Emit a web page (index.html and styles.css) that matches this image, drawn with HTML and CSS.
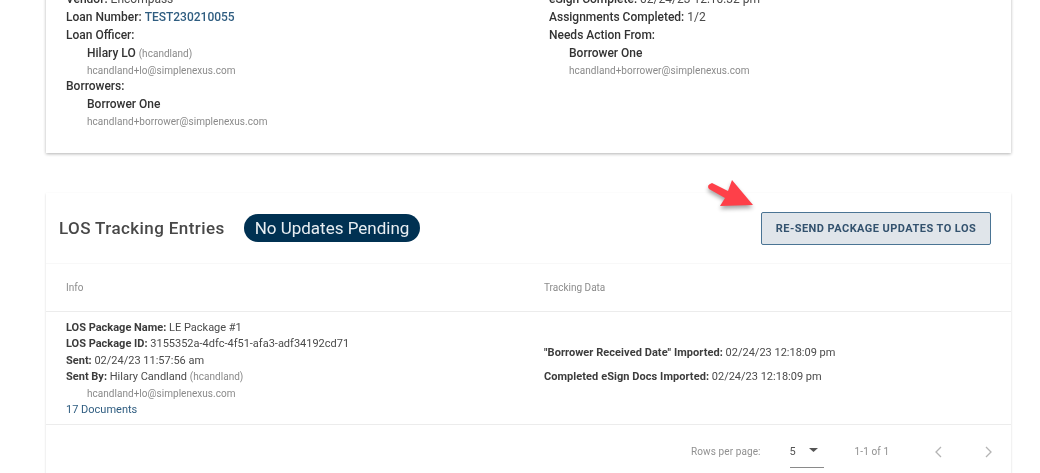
FILE: index.html
```html
<!DOCTYPE html>
<html lang="en">
<head>
<meta charset="utf-8">
<title>LOS Tracking</title>
<link rel="stylesheet" href="styles.css">
</head>
<body>
<div class="page">
  <section class="card summary">
    <div class="col">
      <div class="line"><b>Vendor:</b> Encompass</div>
      <div class="line"><b>Loan Number:</b> <a class="link strong">TEST230210055</a></div>
      <div class="line"><b>Loan Officer:</b></div>
      <div class="line indent"><b>Hilary LO</b> <span class="sub">(hcandland)</span></div>
      <div class="line indent sub mail">hcandland+lo@simplenexus.com</div>
      <div class="line"><b>Borrowers:</b></div>
      <div class="line indent"><b>Borrower One</b></div>
      <div class="line indent sub mail">hcandland+borrower@simplenexus.com</div>
    </div>
    <div class="col">
      <div class="line"><b>eSign Complete:</b> 02/24/23 12:10:32 pm</div>
      <div class="line"><b>Assignments Completed:</b> 1/2</div>
      <div class="line"><b>Needs Action From:</b></div>
      <div class="line indent"><b>Borrower One</b></div>
      <div class="line indent sub mail">hcandland+borrower@simplenexus.com</div>
    </div>
  </section>

  <section class="card tracking">
    <svg class="arrow" width="60" height="44" viewBox="0 0 60 44" aria-hidden="true">
      <path class="arrow-shadow" d="M6 9 L22 17 L26 6 L47 31 L14 32 L19 24 L3 15 Q0 11 6 9 Z"/>
      <path class="arrow-fill" d="M6 6 L22 14 L26 3 L47 28 L14 29 L19 21 L3 12 Q0 8 6 6 Z"/>
    </svg>
    <header class="track-head">
      <h2 class="title">LOS Tracking Entries</h2>
      <span class="chip">No Updates Pending</span>
      <button class="resend" type="button">RE-SEND PACKAGE UPDATES TO LOS</button>
    </header>
    <div class="row thead">
      <div>Info</div>
      <div>Tracking Data</div>
    </div>
    <div class="row tbody">
      <div class="cell">
        <div class="tline"><b>LOS Package Name:</b> LE Package #1</div>
        <div class="tline"><b>LOS Package ID:</b> 3155352a-4dfc-4f51-afa3-adf34192cd71</div>
        <div class="tline"><b>Sent:</b> 02/24/23 11:57:56 am</div>
        <div class="tline"><b>Sent By:</b> Hilary Candland <span class="sub">(hcandland)</span></div>
        <div class="tline indent sub mail">hcandland+lo@simplenexus.com</div>
        <div class="tline"><a class="link">17 Documents</a></div>
      </div>
      <div class="cell data">
        <div><b>"Borrower Received Date" Imported:</b> 02/24/23 12:18:09 pm</div>
        <div><b>Completed eSign Docs Imported:</b> 02/24/23 12:18:09 pm</div>
      </div>
    </div>
    <footer class="pager">
      <span class="rows-label">Rows per page:</span>
      <span class="select">5
        <svg class="caret" width="9" height="4" viewBox="0 0 9 4" aria-hidden="true"><path d="M0 0H9L4.5 4Z"/></svg>
      </span>
      <span class="range">1-1 of 1</span>
      <svg class="nav first" width="8" height="12" viewBox="0 0 8 12" aria-hidden="true"><path d="M7 1L2 6L7 11"/></svg>
      <svg class="nav" width="8" height="12" viewBox="0 0 8 12" aria-hidden="true"><path d="M1 1L6 6L1 11"/></svg>
    </footer>
  </section>
</div>
</body>
</html>
```
FILE: styles.css
```css
html, body {
  margin: 0;
  height: 473px;
  overflow: hidden;
  background: #fff;
}
.page {
  width: 965px;
  margin: -9.3px 0 0 46px;
  font: 400 11px/17.2px Roboto, "Liberation Sans", sans-serif;
  color: #4a4a4a;
  filter: blur(0.5px);
}
b { font-weight: 700; color: #3c3c3c; }
.card {
  background: #fff;
  box-shadow: 0 1px 3px rgba(0, 0, 0, .3);
}
.summary {
  display: grid;
  grid-template-columns: 483px 1fr;
  height: 162.3px;
  padding-left: 20px;
  box-sizing: border-box;
  margin-bottom: 40px;
  font-size: 12px;
}
.summary b { font-weight: 500; color: #333; }
.line { height: 18px; }
.line.indent { height: 17px; }
.line.mail { height: 16px; }
.indent { padding-left: 21px; }
.col:last-child .indent { padding-left: 20px; }
.sub { color: #8a8a8a; font-size: 10px; letter-spacing: .03px; }
.mail { color: #8a8a8a; }
.link { color: #2f5d80; }
.strong { font-weight: 500; }

.tracking {
  position: relative;
  height: 300px;
  box-shadow: 0 1px 2px rgba(0, 0, 0, .16);
}
.arrow { position: absolute; left: 660px; top: -16px; overflow: visible; }
.arrow-fill { fill: #fe4049; }
.arrow-shadow { fill: #000; opacity: .35; filter: blur(2px); }
.track-head {
  display: flex;
  align-items: center;
  height: 70px;
  padding: 0 20px 0 13px;
  border-bottom: 1px solid #f8f8f8;
}
.title {
  margin: 1px 19px 0 0;
  font-size: 17px;
  font-weight: 500;
  letter-spacing: .41px;
  color: #484848;
}
.chip {
  height: 28px;
  line-height: 28px;
  padding: 0 11px;
  border-radius: 14px;
  background: #003152;
  color: #e8eef2;
  font-size: 17px;
  letter-spacing: 0;
  white-space: nowrap;
}
.resend {
  margin-left: auto;
  width: 230px;
  height: 33px;
  padding: 0;
  background: #e0e5ea;
  border: 1px solid #4a7494;
  border-radius: 2px;
  color: #33526e;
  font: 700 11px Roboto, "Liberation Sans", sans-serif;
  letter-spacing: .45px;
}
.row {
  display: grid;
  grid-template-columns: 478px 1fr;
  padding-left: 20px;
  border-bottom: 1px solid #ececec;
}
.thead {
  height: 47px;
  align-items: center;
  font-size: 10px;
  color: #8c8c8c;
}
.tbody { height: 112px; }
.cell { padding-top: 8px; }
.tline { height: 16.4px; line-height: 16.4px; }
.data {
  display: flex;
  flex-direction: column;
  justify-content: center;
  gap: 7px;
  padding: 0 0 7px;
}
.data b { letter-spacing: .06px; }
.pager {
  display: flex;
  align-items: center;
  height: 52px;
  padding-top: 2px;
  box-sizing: border-box;
  font-size: 10px;
  letter-spacing: .1px;
  color: #909090;
}
.rows-label { margin-left: 645px; }
.select {
  position: relative;
  display: flex;
  align-items: center;
  gap: 13px;
  width: 34px;
  height: 32px;
  margin: 0 0 0 29px;
  color: #555;
  border-bottom: 1px solid #8a8a8a;
  box-sizing: border-box;
  font-size: 11px;
}
.caret { margin-bottom: 4px; fill: #555; }
.range { margin-left: 31px; }
.nav { fill: none; stroke: #b4b4b4; stroke-width: 1.3; margin-left: 43px; }
.nav.first { margin-left: 45px; }
```
